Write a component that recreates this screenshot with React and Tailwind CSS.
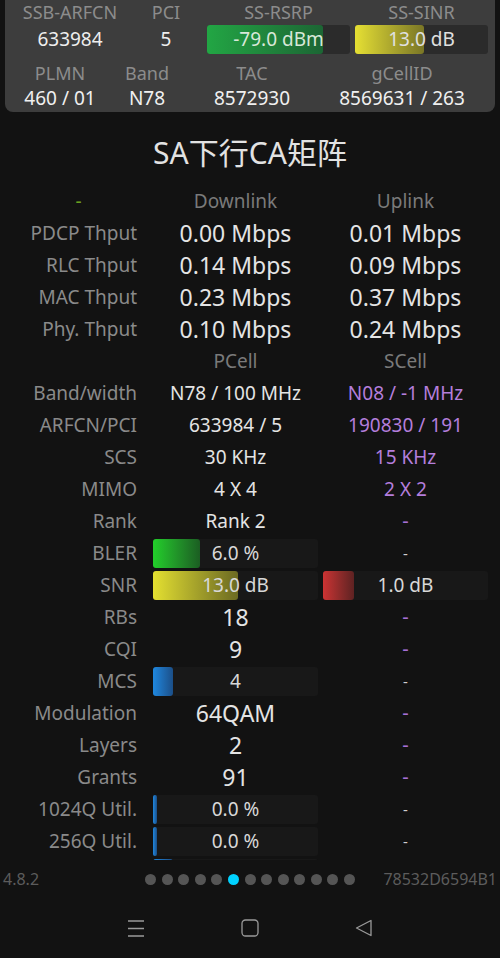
import React from 'react'

const FONT = { fontFamily: '"Noto Sans", "Noto Sans CJK SC", sans-serif' }

// bar fills
const FILL = {
  green: 'bg-gradient-to-r from-[#22d02a] to-[#1b5e22]',
  yellow: 'bg-gradient-to-r from-[#e4e030] to-[#6c6a22]',
  red: 'bg-gradient-to-r from-[#cc3333] to-[#5e2222]',
  blue: 'bg-gradient-to-r from-[#1e88e0] to-[#1b4f88]',
}

function Bar({ fill, width, text }) {
  return (
    <div className="relative h-[29px] w-[165px] rounded-[3px] bg-[#181818]">
      <div className={`absolute left-0 top-0 h-full rounded-[3px] ${FILL[fill]}`} style={{ width }} />
      <div className="relative flex h-full items-center justify-center text-[19px] text-[#d8d8d8]">{text}</div>
    </div>
  )
}

function Cell({ v }) {
  if (v == null) return <div className="w-[165px]" />
  if (v.bar) return <Bar {...v.bar} />
  const tone = {
    head: 'text-[19px] text-[#7a7a7a]',
    big: 'text-[23px] text-[#e4e4e4]',
    norm: 'text-[19px] text-[#e4e4e4]',
    purple: 'text-[19px] text-[#b47edc]',
    pdash: 'text-[20px] text-[#a66fd6]',
    dash: 'text-[15px] text-[#d0d0d0]',
  }[v.t || 'norm']
  return <div className={`flex h-full w-[165px] items-center justify-center ${tone}`}>{v.s}</div>
}

const rows = [
  { label: '-', green: true, a: { s: 'Downlink', t: 'head' }, b: { s: 'Uplink', t: 'head' } },
  { label: 'PDCP Thput', a: { s: '0.00 Mbps', t: 'big' }, b: { s: '0.01 Mbps', t: 'big' } },
  { label: 'RLC Thput', a: { s: '0.14 Mbps', t: 'big' }, b: { s: '0.09 Mbps', t: 'big' } },
  { label: 'MAC Thput', a: { s: '0.23 Mbps', t: 'big' }, b: { s: '0.37 Mbps', t: 'big' } },
  { label: 'Phy. Thput', a: { s: '0.10 Mbps', t: 'big' }, b: { s: '0.24 Mbps', t: 'big' } },
  { label: '', a: { s: 'PCell', t: 'head' }, b: { s: 'SCell', t: 'head' } },
  { label: 'Band/width', a: { s: 'N78 / 100 MHz' }, b: { s: 'N08 / -1 MHz', t: 'purple' } },
  { label: 'ARFCN/PCI', a: { s: '633984 / 5' }, b: { s: '190830 / 191', t: 'purple' } },
  { label: 'SCS', a: { s: '30 KHz' }, b: { s: '15 KHz', t: 'purple' } },
  { label: 'MIMO', a: { s: '4 X 4' }, b: { s: '2 X 2', t: 'purple' } },
  { label: 'Rank', a: { s: 'Rank 2' }, b: { s: '-', t: 'pdash' } },
  { label: 'BLER', a: { bar: { fill: 'green', width: 47, text: '6.0 %' } }, b: { s: '-', t: 'dash' } },
  { label: 'SNR', a: { bar: { fill: 'yellow', width: 85, text: '13.0 dB' } }, b: { bar: { fill: 'red', width: 31, text: '1.0 dB' } } },
  { label: 'RBs', a: { s: '18', t: 'big' }, b: { s: '-', t: 'pdash' } },
  { label: 'CQI', a: { s: '9', t: 'big' }, b: { s: '-', t: 'pdash' } },
  { label: 'MCS', a: { bar: { fill: 'blue', width: 20, text: '4' } }, b: { s: '-', t: 'dash' } },
  { label: 'Modulation', a: { s: '64QAM', t: 'big' }, b: { s: '-', t: 'pdash' } },
  { label: 'Layers', a: { s: '2', t: 'big' }, b: { s: '-', t: 'pdash' } },
  { label: 'Grants', a: { s: '91', t: 'big' }, b: { s: '-', t: 'pdash' } },
  { label: '1024Q Util.', a: { bar: { fill: 'blue', width: 4, text: '0.0 %' } }, b: { s: '-', t: 'dash' } },
  { label: '256Q Util.', a: { bar: { fill: 'blue', width: 4, text: '0.0 %' } }, b: { s: '-', t: 'dash' } },
  { label: '', a: { bar: { fill: 'blue', width: 20, text: '' } }, b: null },
]

function TopPanel() {
  return (
    <div className="mx-[5px] rounded-b-[8px] bg-[#3d3d3d] pb-[4px]">
      <div className="flex h-[22px] items-center pt-[2px] text-[18px] leading-[20px] text-[#8c8c8c]">
        <div className="w-[130px] text-center">SSB-ARFCN</div>
        <div className="w-[62px] text-center">PCI</div>
        <div className="ml-[10px] w-[143px] text-center">SS-RSRP</div>
        <div className="ml-[5px] w-[133px] text-center">SS-SINR</div>
      </div>
      <div className="mt-[3px] flex h-[29px] items-center text-[19px] text-[#eeeeee]">
        <div className="w-[130px] text-center">633984</div>
        <div className="w-[62px] text-center">5</div>
        <div className="relative ml-[10px] h-full w-[143px] rounded-[3px] bg-[#2b2b2b]">
          <div className="absolute left-0 top-0 h-full w-[116px] rounded-[3px] bg-gradient-to-r from-[#22a644] to-[#1c6634]" />
          <div className="relative flex h-full items-center justify-center text-[#d8e8d8]">-79.0 dBm</div>
        </div>
        <div className="relative ml-[5px] h-full w-[133px] rounded-[3px] bg-[#2b2b2b]">
          <div className="absolute left-0 top-0 h-full w-[69px] rounded-[3px] bg-gradient-to-r from-[#e6e033] to-[#7a7626]" />
          <div className="relative flex h-full items-center justify-center text-[#e0e0e0]">13.0 dB</div>
        </div>
      </div>
      <div className="mt-[9px] flex h-5 items-center text-[18px] text-[#8c8c8c]">
        <div className="w-[110px] text-center">PLMN</div>
        <div className="w-[64px] text-center">Band</div>
        <div className="w-[146px] text-center">TAC</div>
        <div className="w-[154px] text-center">gCellID</div>
      </div>
      <div className="mt-[5px] flex h-5 items-center text-[19px] text-[#f0f0f0]">
        <div className="w-[110px] text-center">460 / 01</div>
        <div className="w-[64px] text-center">N78</div>
        <div className="w-[146px] text-center">8572930</div>
        <div className="w-[154px] text-center">8569631 / 263</div>
      </div>
    </div>
  )
}

function NavBar() {
  return (
    <div className="flex h-[60px] items-center justify-center gap-[96px]">
      <svg width="18" height="18" viewBox="0 0 18 18" fill="none" stroke="#9a9a9a" strokeWidth="1.3">
        <path d="M1 2h16M1 9.5h16M1 17h16" />
      </svg>
      <svg width="18" height="18" viewBox="0 0 18 18" fill="none" stroke="#9a9a9a" strokeWidth="1.3">
        <rect x="1" y="1" width="16" height="16" rx="3.5" />
      </svg>
      <svg width="18" height="18" viewBox="0 0 18 18" fill="none" stroke="#9a9a9a" strokeWidth="1.3">
        <path d="M16 1.5v15L1.5 9z" strokeLinejoin="round" />
      </svg>
    </div>
  )
}

export default function App() {
  return (
    <div className="flex h-[958px] w-[500px] flex-col overflow-hidden bg-[#121212] leading-none" style={FONT}>
      <TopPanel />
      <div className="pt-[23px] pb-[14px] text-center text-[30px] leading-[36px] text-[#e2e2e2]">SA下行CA矩阵</div>
      {/* matrix, clipped at the footer */}
      <div className="h-[675px] overflow-hidden">
        {rows.map((r, i) => (
          <div key={i} className="flex h-8 items-center">
            <div
              className={`ml-[20px] w-[117px] text-[19px] ${r.green ? 'text-center text-[#6aa020]' : 'text-right text-[#8a8a8a]'}`}
            >
              {r.label}
            </div>
            <div className="ml-[16px] flex h-full items-center">
              <Cell v={r.a} />
            </div>
            <div className="ml-[5px] flex h-full items-center">
              <Cell v={r.b} />
            </div>
          </div>
        ))}
      </div>
      <div className="grid h-[38px] grid-cols-[1fr_auto_1fr] items-center px-[3px] text-[16px] text-[#5c5c5c]">
        <span>4.8.2</span>
        <div className="flex gap-[5.6px]">
          {Array.from({ length: 13 }).map((_, i) => (
            <div key={i} className={`h-[11px] w-[11px] rounded-full ${i === 5 ? 'bg-[#00d2ff]' : 'bg-[#555555]'}`} />
          ))}
        </div>
        <span className="text-right">78532D6594B1</span>
      </div>
      <NavBar />
    </div>
  )
}
